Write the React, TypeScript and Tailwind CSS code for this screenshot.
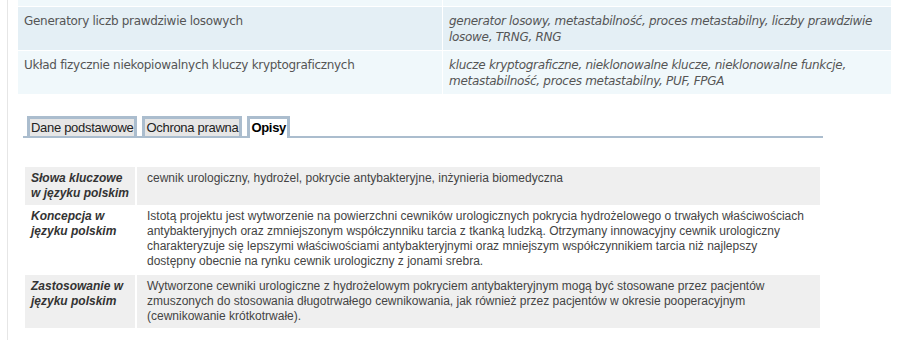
const topRows = [
  {
    name: '',
    keywords: '',
  },
  {
    name: 'Generatory liczb prawdziwie losowych',
    keywords: 'generator losowy, metastabilność, proces metastabilny, liczby prawdziwie losowe, TRNG, RNG',
  },
  {
    name: 'Układ fizycznie niekopiowalnych kluczy kryptograficznych',
    keywords: 'klucze kryptograficzne, nieklonowalne klucze, nieklonowalne funkcje, metastabilność, proces metastabilny, PUF, FPGA',
  },
];

const descRows = [
  {
    label: 'Słowa kluczowe w języku polskim',
    text: 'cewnik urologiczny, hydrożel, pokrycie antybakteryjne, inżynieria biomedyczna',
  },
  {
    label: 'Koncepcja w języku polskim',
    text: 'Istotą projektu jest wytworzenie na powierzchni cewników urologicznych pokrycia hydrożelowego o trwałych właściwościach antybakteryjnych oraz zmniejszonym współczynniku tarcia z tkanką ludzką. Otrzymany innowacyjny cewnik urologiczny charakteryzuje się lepszymi właściwościami antybakteryjnymi oraz mniejszym współczynnikiem tarcia niż najlepszy dostępny obecnie na rynku cewnik urologiczny z jonami srebra.',
  },
  {
    label: 'Zastosowanie w języku polskim',
    text: 'Wytworzone cewniki urologiczne z hydrożelowym pokryciem antybakteryjnym mogą być stosowane przez pacjentów zmuszonych do stosowania długotrwałego cewnikowania, jak również przez pacjentów w okresie pooperacyjnym (cewnikowanie krótkotrwałe).',
  },
];

const tabs = ['Dane podstawowe', 'Ochrona prawna', 'Opisy'];

const App = () => {
  return (
    <div className="w-[900px] h-[340px] bg-white overflow-hidden">
      <div className="ml-[7px] border-l border-[#e6e6e6] pl-[10px] h-full">
        <div className="w-[873px] font-['DejaVu_Sans',sans-serif] text-[12px] leading-[16px] tracking-[-0.3px] text-[#555]">
          {topRows.map((row, i) => (
            <div
              key={i}
              className={
                'grid grid-cols-[423px_449px] gap-x-px border-b border-white ' +
                (i === 0 ? 'h-[7px] ' : 'h-[44px] ') +
                (i === 1 ? 'bg-[#e4eff5]' : 'bg-[#f0f8fb]')
              }
            >
              <div className="px-[6px] pt-[6px]">{row.name}</div>
              <div className="px-[6px] pt-[6px] italic border-l border-white">{row.keywords}</div>
            </div>
          ))}
        </div>

        <div className="mt-[21px] ml-[5px] w-[800px] flex gap-[5px] border-b-2 border-[#abbdce] pl-[4px] font-['Liberation_Sans',Arial,sans-serif] text-[13px] leading-[17px] tracking-[-0.3px] text-[#222]">
          {tabs.map((t) =>
            t === 'Opisy' ? (
              <div key={t} className="border-[3px] border-b-0 border-[#abbdce] bg-white px-[1px] font-bold -mb-[2px] pb-[2px] text-black">
                {t}
              </div>
            ) : (
              <div key={t} className="border-[3px] border-b-0 border-[#abbdce] bg-[#e6e6e6] px-[1px]">
                {t}
              </div>
            )
          )}
        </div>

        <div className="mt-[29px] ml-[7px] w-[795px] font-['Liberation_Sans',Arial,sans-serif] text-[12px] leading-[15px]">
          {descRows.map((row, i) => (
            <div
              key={i}
              className={'grid grid-cols-[110px_1fr] gap-x-[2px] ' + (i === 1 ? '' : '[&>div]:bg-[#efefef]')}
            >
              <div className="pl-[6px] pr-[4px] pt-[4px] pb-[4px] font-bold italic text-[#333]">{row.label}</div>
              <div className={'pl-[10px] pr-[12px] pt-[4px] text-[#444] ' + (i === 1 ? 'pb-[6px]' : 'pb-[4px]')}>
                {row.text}
              </div>
            </div>
          ))}
        </div>
      </div>
    </div>
  );
};

export default App;
